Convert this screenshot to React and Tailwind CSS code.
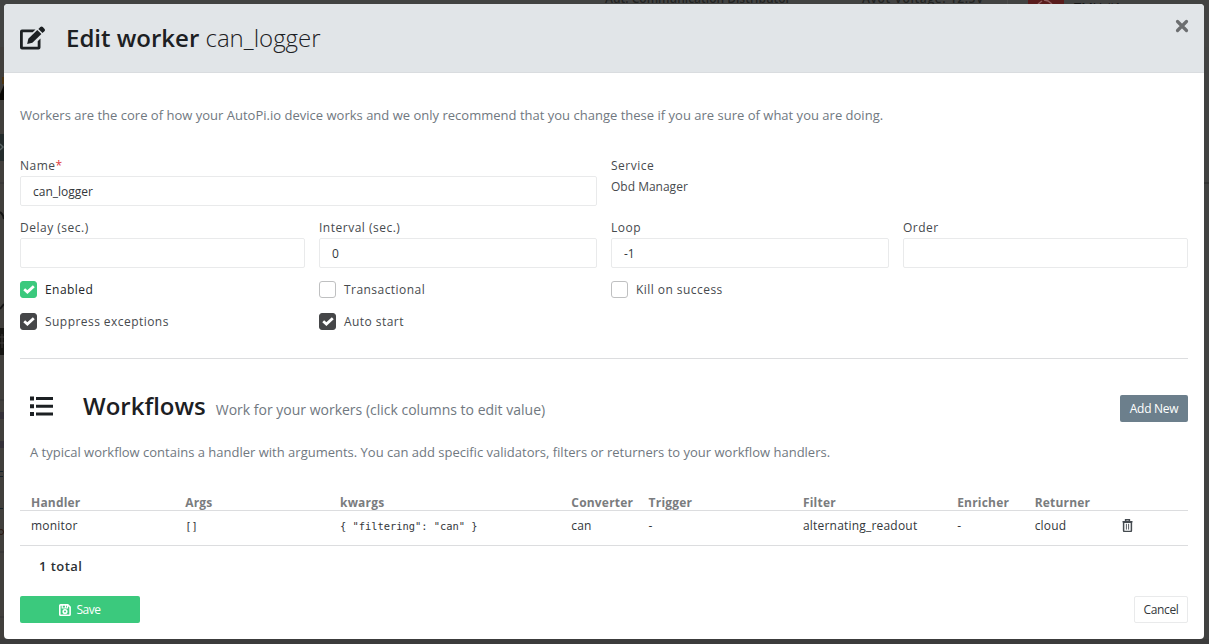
import React from "react";

const font = "font-['Open_Sans','Noto_Sans',sans-serif]";

function Check({ label, checked, green }) {
  const tone = green ? "bg-[#3bc97d] border-[#3bc97d]" : checked ? "bg-[#454648] border-[#454648]" : "bg-white border-[#bfc0c1]";
  return (
    <label className="flex h-[17px] items-center">
      <span className={"flex h-[17px] w-[17px] items-center justify-center rounded-[3px] border " + tone}>
        {checked && (
          <svg viewBox="0 0 12 9" className="h-[9px] w-3 shrink-0">
            <path d="M1.2 4.3 4.4 7.1 10.8 1.3" fill="none" stroke="#fff" strokeWidth="2.8" />
          </svg>
        )}
      </span>
      <span className={"ml-2 whitespace-nowrap text-[12px] leading-[17px] tracking-[0.450px] " + (green ? "text-[#212529]" : "text-[#464a4e]")}>{label}</span>
    </label>
  );
}

function Field({ label, value, required }) {
  return (
    <div className="flex flex-col">
      <div className="h-[20px] whitespace-nowrap pt-px text-[12px] leading-[18px] tracking-[0.500px] text-[#464a4e]">
        {label}
        {required && <span className="text-[#e0393e]">*</span>}
      </div>
      <div className="flex h-[30px] items-center rounded-[2px] border border-[#e9eaeb] pl-3 pt-px text-[12px] leading-[18px] text-[#33373b]">{value}</div>
    </div>
  );
}

function EditIcon() {
  return (
    <svg viewBox="0 0 26 24" className="h-6 w-[26px]" fill="#1c2023">
      <path d="M15.500 3.500H2A2 2 0 0 0 0 5.500v16a2 2 0 0 0 2 2h16.500a2 2 0 0 0 2-2V12.500L17.700 15.300v5.500H2.800V6.300h9.900z" />
      <path d="M8.300 12.800 17.300 4l4.100 4.100-9 8.700-5.200 1.300z" />
      <path d="M18.400 3 20.300 1.100a1.800 1.800 0 0 1 2.500 0L24.400 2.700a1.800 1.800 0 0 1 0 2.500L22.500 7z" />
    </svg>
  );
}

function ListIcon() {
  return (
    <svg viewBox="0 0 24 20" className="h-5 w-6" fill="#1c2023">
      <path d="M0 .6h4v4H0zM0 8.300h4v4H0zM0 16h4v4H0zM6 1.100h17v3H6zM6 8.800h17v3H6zM6 16.500h17v3H6z" />
    </svg>
  );
}

function SaveIcon() {
  return (
    <svg viewBox="0 0 12 12" className="h-3 w-3" fill="none" stroke="#fff">
      <path d="M1.6.9h7.2l2.3 2.2v7.3a.8.8 0 0 1-.8.8H1.6a.8.8 0 0 1-.8-.8V1.7a.8.8 0 0 1 .8-.8z" strokeWidth="1.6" />
      <path d="M3.2 1v3h5.300V1M6.500 1v2.500" strokeWidth="1.2" />
      <circle cx="6" cy="7.6" r="1.8" strokeWidth="1.6" />
    </svg>
  );
}

function TrashIcon() {
  return (
    <svg viewBox="0 0 11 13" className="h-[13px] w-[11px]" fill="none" stroke="#454b50">
      <path d="M1.6 3.2h7.8v8.300a1 1 0 0 1-1 1H2.600a1 1 0 0 1-1-1zM.5 2.700h10M3.600 2.400V.8h3.800v1.600" strokeWidth="1.500" />
      <path d="M4.400 4.800v5.800M6.600 4.800v5.800" strokeWidth=".9" />
    </svg>
  );
}

function Backdrop() {
  return (
    <div className="absolute inset-0 overflow-hidden bg-[#424342]">
      <div className="absolute left-0 top-[47px] h-[597px] w-1 bg-[#413f3c]" />
      <div className="absolute left-0 top-[134px] h-[27px] w-1 bg-[#252c2c]" />
      <div className="absolute left-0 top-[328px] h-[27px] w-1 bg-[#161512]" />
      <svg className="absolute left-0 top-0 h-[644px] w-1" viewBox="0 0 4 644" fill="none">
        <path d="M0 94 4 85v15H0z" fill="#0b0906" />
        <path d="M2 77h2v7H2z" fill="#4d3410" />
        <path d="M0 144l3 3-3 3" stroke="#596363" strokeWidth="1.5" />
        <path d="M0 212q3 2 4 7M0 309l4-5" stroke="#141414" strokeWidth="2" />
        <path d="M0 337h4M0 343h4M2 334v14" stroke="#3a3937" />
        <path d="M0 183h4M0 400h4M0 552h4M0 617h4" stroke="#333" />
        <path d="M0 471.500h3M0 476.500h3M0 508.500h3" stroke="#14222a" />
        <path d="M1 412v7M1 441v7M3 412v7M3 441v7" stroke="#282334" />
        <circle cx="1" cy="532" r="2.500" stroke="#2a1710" />
      </svg>
      <div className="absolute left-[605px] top-[-10px] whitespace-nowrap text-[12px] font-semibold leading-[18px] text-[#222423]">Aut. Communication Distributor</div>
      <div className="absolute left-[862px] top-[-10px] whitespace-nowrap text-[12px] font-semibold leading-[18px] tracking-[0.600px] text-[#222423]">Avot Voltage: 12.5V</div>
      <div className="absolute left-[1007px] top-0 h-1 w-px bg-[#4b4c4b]" />
      <div className="absolute left-[1028px] top-0 h-1 w-9 bg-[#591c1c]" />
      <svg className="absolute left-[1037px] top-0 h-1 w-4" viewBox="0 0 16 4" fill="none" stroke="#8f5d5d" strokeWidth="1.500">
        <path d="M1 4 5 1M7 0l4 1 4 3" />
      </svg>
      <div className="absolute left-[1074px] top-[-2px] text-[13px] leading-[18px] text-[#151616]">TMU #1</div>
      <div className="absolute right-0 top-[47px] h-[597px] w-[5px] bg-[#414241]" />
      <div className="absolute right-0 top-[182px] h-0.5 w-[5px] bg-[#343534]" />
      <div className="absolute bottom-0 left-0 h-[5px] w-full bg-[#3c3c3c]" />
    </div>
  );
}

const columns = ["Handler", "Args", "kwargs", "Converter", "Trigger", "Filter", "Enricher", "Returner", ""];
const gridCols = "grid grid-cols-[154.200px_154.800px_231.300px_77.300px_154.400px_154.200px_77.500px_87px_auto] pl-[11px]";
const mono = "font-['DejaVu_Sans_Mono',monospace] text-[10.400px] tracking-normal";

export default function App() {
  return (
    <div className={"relative h-[644px] w-[1209px] overflow-hidden p-1 " + font}>
      <Backdrop />
      <div className="relative flex h-[635px] w-[1200px] flex-col overflow-hidden rounded-[4px] bg-white">
        <header className="flex h-[69px] shrink-0 justify-between border-b border-[#d9dcdf] bg-[#e1e5e8]">
          <div className="flex items-center pl-4 text-[#1c2023]">
            <EditIcon />
            <h1 className="ml-5 whitespace-nowrap text-[24px] font-light leading-8">
              <b className="font-semibold">Edit worker</b> can_logger
            </h1>
          </div>
          <svg viewBox="0 0 14 14" className="mr-[15px] mt-[15px] h-[14px] w-[14px]">
            <path d="M2.500 2.500l9 9M11.500 2.500l-9 9" stroke="#6c6e70" strokeWidth="3.200" strokeLinecap="round" />
          </svg>
        </header>

        <main className="flex flex-col px-4">
          <p className="mt-8 whitespace-nowrap text-[13px] leading-5 tracking-[0.008px] text-[#70787f]">
            Workers are the core of how your AutoPi.io device works and we only recommend that you change these if you are sure of what you are doing.
          </p>

          <div className="mt-[31px] grid grid-cols-[577px_1fr] gap-x-[14px]">
            <Field label="Name" value="can_logger" required />
            <div className="pt-px text-[12px] leading-[18px] text-[#464a4e]">
              <div className="h-[21px] tracking-[0.500px]">Service</div>
              <div>Obd Manager</div>
            </div>
          </div>

          <div className="mt-3 grid grid-cols-[285px_278px_278px_285px] gap-x-[14px]">
            <Field label="Delay (sec.)" value="" />
            <Field label="Interval (sec.)" value="0" />
            <Field label="Loop" value="-1" />
            <Field label="Order" value="" />
          </div>

          <div className="mt-[13px] grid grid-cols-[285px_278px_278px_285px] gap-x-[14px] gap-y-[15px]">
            <Check label="Enabled" checked green />
            <Check label="Transactional" />
            <Check label="Kill on success" />
            <span />
            <Check label="Suppress exceptions" checked />
            <Check label="Auto start" checked />
          </div>

          <hr className="mt-7 border-[#dcdddf]" />

          <div className="mt-[31px] flex h-[32px] items-center pl-[10px]">
            <ListIcon />
            <h2 className="ml-[29px] text-[24px] font-semibold leading-8 text-[#1c2023]">Workflows</h2>
            <span className="ml-[10px] mt-2 whitespace-nowrap text-[14px] leading-5 text-[#70787f]">Work for your workers (click columns to edit value)</span>
            <button className="ml-auto mt-1 h-[27px] w-[68px] rounded-[2px] bg-[#6c7f8c] pt-px text-[12px] leading-[18px] tracking-[-0.300px] text-white">Add New</button>
          </div>

          <p className="mt-5 whitespace-nowrap pl-[10px] text-[13px] leading-5 text-[#70787f]">
            A typical workflow contains a handler with arguments. You can add specific validators, filters or returners to your workflow handlers.
          </p>

          <div className={gridCols + " mt-[32px] h-[17px] border-b border-[#dcdddf] text-[12px] font-bold leading-[18px] tracking-[0.200px] text-[#7a7c7e]"}>
            {columns.map((c, i) => (
              <div key={i}>{c}</div>
            ))}
          </div>
          <div className={gridCols + " h-[35px] items-start border-b border-[#dcdddf] pt-[6px] text-[12px] leading-[18px] tracking-[0.200px] text-[#33373b]"}>
            <div>monitor</div>
            <div className={mono}>[]</div>
            <div className={"whitespace-pre " + mono}>{'{ "filtering": "can" }'}</div>
            <div>can</div>
            <div>-</div>
            <div>alternating_readout</div>
            <div>-</div>
            <div>cloud</div>
            <div className="pt-[2px]"><TrashIcon /></div>
          </div>

          <div className="mt-[11px] pl-[19px] text-[13px] font-semibold leading-[18px] tracking-[0.450px] text-[#2c3034]">1 total</div>

          <footer className="mt-[21px] flex justify-between">
            <button className="flex h-[27px] w-[120px] items-center justify-center gap-[5px] rounded-[2px] bg-[#3bc97d] text-[12px] leading-[18px] tracking-[-0.450px] text-white">
              <SaveIcon />
              Save
            </button>
            <button className="h-[27px] w-[54px] rounded-[2px] border border-[#e9eaeb] text-[12px] leading-[18px] tracking-[-0.350px] text-[#33373b]">Cancel</button>
          </footer>
        </main>
      </div>
    </div>
  );
}
